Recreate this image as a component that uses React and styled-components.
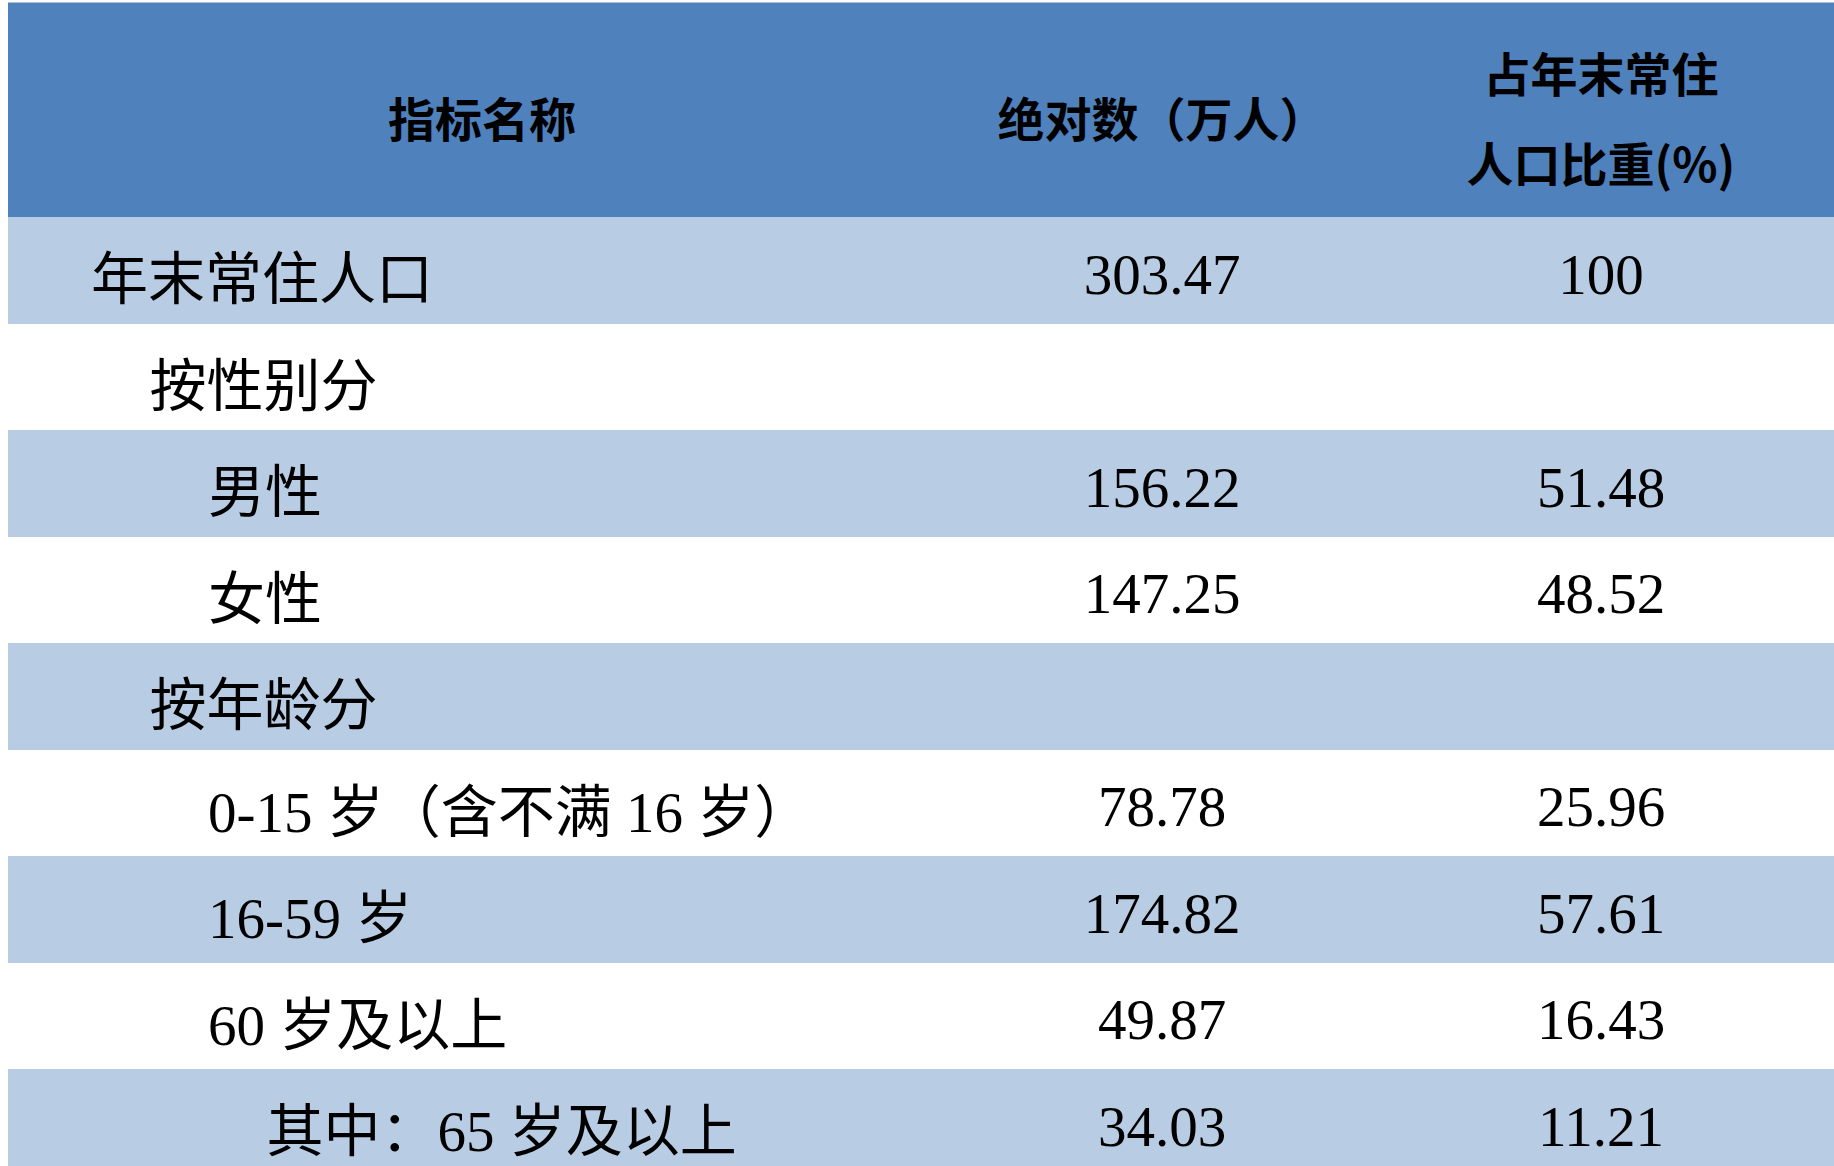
import React from "react";
import styled, { createGlobalStyle } from "styled-components";

const Global = createGlobalStyle`
  html, body {
    margin: 0;
    padding: 0;
    overflow: hidden;
    background: #ffffff;
  }
  body {
    padding: 2px 0 0 8px;
  }
`;

const Table = styled.div`
  width: 1826px;
  display: flex;
  flex-direction: column;
  border-top: 1px solid #a9c0de;
  color: #000;
`;

const HeaderRow = styled.div`
  display: grid;
  grid-template-columns: 948px 412px 466px;
  height: 214px;
  background: #4f81bd;
`;

const HeaderCell = styled.div`
  display: flex;
  flex-direction: column;
  align-items: center;
  justify-content: center;
  padding-top: 14px;
  font-family: "Noto Sans CJK SC", "Liberation Sans", sans-serif;
  font-weight: 700;
  font-size: 47px;
  line-height: 90px;
  white-space: nowrap;
`;

const BodyRow = styled.div`
  display: grid;
  grid-template-columns: 948px 412px 466px;
  height: 106.5px;
  background: ${(p) => (p.$band ? "#b8cce4" : "#ffffff")};
`;

const LabelCell = styled.div`
  display: flex;
  align-items: center;
  padding-top: 8px;
  padding-left: ${(p) => 83 + p.$level * 58.5}px;
  font-family: "Liberation Serif", "Noto Sans CJK SC", serif;
  font-size: 57px;
  white-space: nowrap;
`;

const NumCell = styled.div`
  display: flex;
  align-items: center;
  justify-content: center;
  padding-top: 8px;
  font-family: "Liberation Serif", serif;
  font-size: 57px;
  white-space: nowrap;
`;

const rows = [
  { label: "年末常住人口", level: 0, a: "303.47", b: "100", band: true },
  { label: "按性别分", level: 1 },
  { label: "男性", level: 2, a: "156.22", b: "51.48", band: true },
  { label: "女性", level: 2, a: "147.25", b: "48.52" },
  { label: "按年龄分", level: 1, band: true },
  { label: "0-15 岁（含不满 16 岁）", level: 2, a: "78.78", b: "25.96" },
  { label: "16-59 岁", level: 2, a: "174.82", b: "57.61", band: true },
  { label: "60 岁及以上", level: 2, a: "49.87", b: "16.43" },
  { label: "其中：65 岁及以上", level: 3, a: "34.03", b: "11.21", band: true },
];

export default function App() {
  return (
    <>
      <Global />
      <Table>
        <HeaderRow>
          <HeaderCell>指标名称</HeaderCell>
          <HeaderCell>绝对数（万人）</HeaderCell>
          <HeaderCell>
            <span>占年末常住</span>
            <span>人口比重(%)</span>
          </HeaderCell>
        </HeaderRow>
        {rows.map((r) => (
          <BodyRow key={r.label} $band={r.band}>
            <LabelCell $level={r.level}>{r.label}</LabelCell>
            <NumCell>{r.a || ""}</NumCell>
            <NumCell>{r.b || ""}</NumCell>
          </BodyRow>
        ))}
      </Table>
    </>
  );
}
